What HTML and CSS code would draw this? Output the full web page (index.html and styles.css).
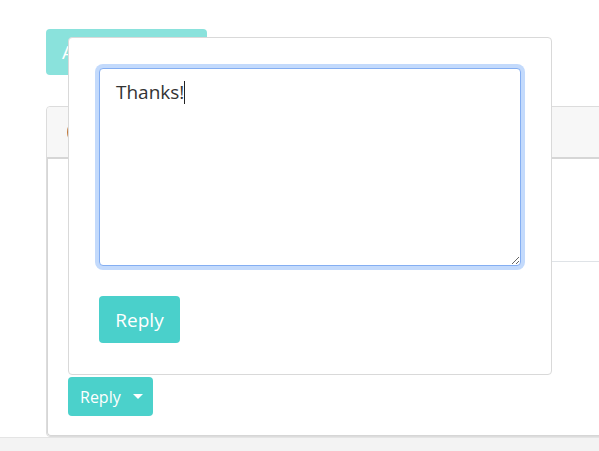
FILE: index.html
```html
<!DOCTYPE html>
<html>
<head>
<meta charset="utf-8">
<link rel="stylesheet" href="styles.css">
</head>
<body>
<div class="page">
  <button class="btn btn-add">Add a comment</button>
  <div class="card">
    <div class="card-header"><span class="avatar avatar-orange"></span></div>
    <div class="card-body">
      <div class="comment"><span class="avatar avatar-gray"></span></div>
      <hr class="divider">
      <div class="spacer"></div>
      <button class="btn btn-toggle">Reply <span class="caret"></span></button>
    </div>
  </div>
</div>
<div class="footer"></div>
<div class="popover">
  <div class="field">
    <textarea class="reply-input">Thanks!</textarea>
    <span class="fake-caret"></span>
  </div>
  <button class="btn btn-reply">Reply</button>
</div>
</body>
</html>
```
FILE: styles.css
```css
* { box-sizing: border-box; }
html, body { margin: 0; padding: 0; }
body {
  width: 599px;
  height: 451px;
  overflow: hidden;
  background: #fff;
  font-family: "Open Sans", "Noto Sans", sans-serif;
  position: relative;
}
.page {
  padding: 29px 0 0 46px;
  overflow: hidden;
  height: 437px;
}
.btn {
  border: 0;
  border-radius: 4px;
  color: #fff;
  font-family: inherit;
  cursor: pointer;
  display: block;
}
.btn-add {
  width: 161px;
  height: 46px;
  background: #8ae2dc;
  font-size: 19px;
  text-align: left;
  padding: 0 16px;
  white-space: nowrap;
  overflow: hidden;
}
.card {
  margin-top: 31px;
  width: 600px;
  border: 1px solid #dcdcdc;
  border-radius: 4px;
}
.card-header {
  height: 52px;
  background: #f7f7f7;
  border-bottom: 2px solid #d6d6d6;
  display: flex;
  align-items: center;
  padding-left: 20px;
  border-radius: 4px 4px 0 0;
}
.avatar {
  display: block;
  border-radius: 50%;
}
.avatar-orange {
  width: 30px;
  height: 30px;
  background: #c27a3c;
}
.card-body {
  border-left: 1px solid #d6d6d6;
  border-bottom: 1px solid #d6d6d6;
  border-bottom-left-radius: 4px;
  padding: 0 0 19px 20px;
}
.comment {
  height: 102px;
  padding-top: 32px;
}
.avatar-gray {
  width: 40px;
  height: 40px;
  background: #5a5a5a;
}
.divider {
  margin: 0;
  border: 0;
  border-top: 1px solid #dfe3e7;
}
.spacer {
  height: 115px;
}
.btn-toggle {
  height: 39px;
  width: 85px;
  background: #4bd1cb;
  font-size: 16px;
  padding: 0 12px;
  text-align: left;
  display: flex;
  align-items: center;
}
.caret {
  display: inline-block;
  margin-left: 12px;
  width: 0;
  height: 0;
  border-top: 5px solid #fff;
  border-left: 5px solid transparent;
  border-right: 5px solid transparent;
}
.footer {
  height: 14px;
  background: #f3f3f3;
  border-top: 1px solid #e4e4e4;
}
.popover {
  position: absolute;
  left: 68px;
  top: 37px;
  width: 484px;
  height: 338px;
  background: #fff;
  border: 1px solid #d9d9d9;
  border-radius: 4px;
  padding: 30px 30px 0 30px;
}
.field {
  position: relative;
}
.reply-input {
  display: block;
  width: 422px;
  height: 198px;
  border: 1px solid #84aef2;
  border-radius: 4px;
  box-shadow: 0 0 0 4px #c3dafc;
  outline: none;
  font-family: inherit;
  font-size: 19px;
  color: #333;
  padding: 11px 16px;
  resize: both;
  line-height: 1.3;
}
.fake-caret {
  position: absolute;
  left: 85px;
  top: 13px;
  width: 1px;
  height: 23px;
  background: #222;
}
.btn-reply {
  margin-top: 30px;
  width: 81px;
  height: 47px;
  background: #4ad0cb;
  font-size: 19px;
  padding: 0;
}
```
